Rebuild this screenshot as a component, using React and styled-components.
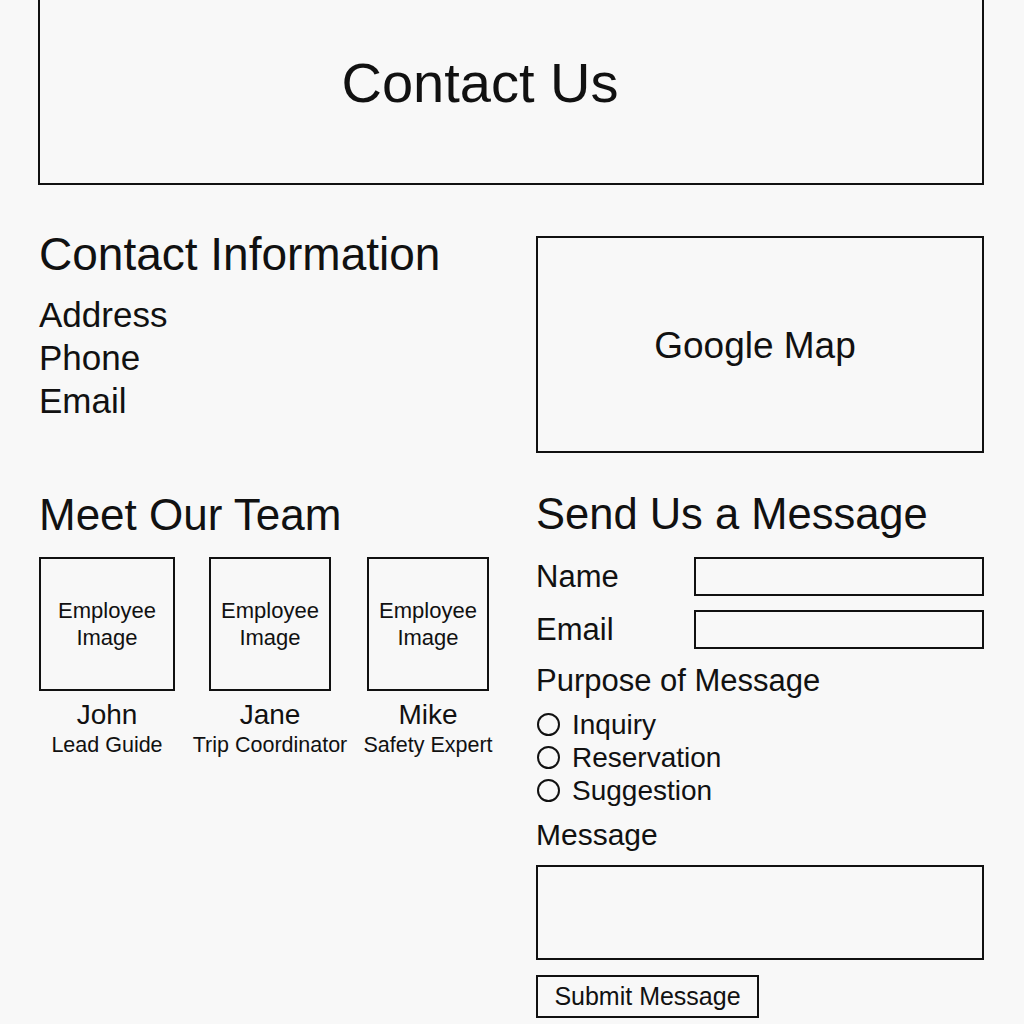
import React from "react";
import styled, { createGlobalStyle } from "styled-components";

const GlobalStyle = createGlobalStyle`
  html, body {
    margin: 0;
    padding: 0;
    background: #f8f8f8;
  }
  body {
    font-family: "Liberation Sans", Arial, sans-serif;
    color: #111;
  }
  * {
    box-sizing: border-box;
  }
`;

const team = [
  { name: "John", role: "Lead Guide", width: 136 },
  { name: "Jane", role: "Trip Coordinator", width: 122 },
  { name: "Mike", role: "Safety Expert", width: 122 },
];

const purposes = ["Inquiry", "Reservation", "Suggestion"];

const App = () => {
  return (
    <Page>
      <GlobalStyle />
      <Header>
        <HeaderTitle>Contact Us</HeaderTitle>
      </Header>

      <Row top={46}>
        <Column>
          <SectionTitle size={46} lh={46}>
            Contact Information
          </SectionTitle>
          <InfoList>
            <InfoItem>Address</InfoItem>
            <InfoItem>Phone</InfoItem>
            <InfoItem>Email</InfoItem>
          </InfoList>
        </Column>
        <MapBox>Google Map</MapBox>
      </Row>

      <Row top={40}>
        <Column>
          <SectionTitle size={44} lh={43}>
            Meet Our Team
          </SectionTitle>
          <Team>
            {team.map(member => (
              <Member key={member.name} width={member.width}>
                <Photo>
                  Employee
                  <br />
                  Image
                </Photo>
                <MemberName>{member.name}</MemberName>
                <MemberRole>{member.role}</MemberRole>
              </Member>
            ))}
          </Team>
        </Column>

        <Form onSubmit={e => e.preventDefault()}>
          <SectionTitle size={43.5} lh={43}>
            Send Us a Message
          </SectionTitle>
          <Fields>
            <FieldRow>
              <FieldLabel>Name</FieldLabel>
              <TextInput type="text" />
            </FieldRow>
            <FieldRow>
              <FieldLabel>Email</FieldLabel>
              <TextInput type="email" />
            </FieldRow>
          </Fields>
          <GroupLabel>Purpose of Message</GroupLabel>
          <RadioList>
            {purposes.map(p => (
              <RadioRow key={p}>
                <Radio type="radio" name="purpose" value={p} />
                {p}
              </RadioRow>
            ))}
          </RadioList>
          <MessageLabel>Message</MessageLabel>
          <MessageBox />
          <SubmitButton type="submit">Submit Message</SubmitButton>
        </Form>
      </Row>
    </Page>
  );
};

export default App;

const Page = styled.div`
  width: 1024px;
  min-height: 1024px;
  padding: 0 40px 0 38px;
  overflow: hidden;
`;

const Header = styled.header`
  height: 189px;
  margin-top: -4px;
  border: 2px solid #111;
  display: flex;
  align-items: center;
  justify-content: center;
  padding: 0 62px 16px 0;
`;

const HeaderTitle = styled.h1`
  margin: 0;
  font-size: 56px;
  line-height: 56px;
  font-weight: 400;
`;

const Row = styled.div`
  display: grid;
  grid-template-columns: 462px 448px;
  column-gap: 36px;
  align-items: start;
  margin-top: ${props => props.top}px;
`;

const Column = styled.div`
  display: flex;
  flex-direction: column;
  padding-left: 1px;
`;

const SectionTitle = styled.h2`
  margin: 0;
  font-size: ${props => props.size}px;
  line-height: ${props => props.lh}px;
  font-weight: 400;
  white-space: nowrap;
`;

const InfoList = styled.div`
  display: flex;
  flex-direction: column;
  margin-top: 16px;
`;

const InfoItem = styled.div`
  font-size: 35px;
  line-height: 43px;
`;

const MapBox = styled.div`
  height: 217px;
  margin-top: 5px;
  border: 2px solid #111;
  display: flex;
  align-items: center;
  justify-content: center;
  font-size: 37px;
  padding: 2px 10px 0 0;
`;

const Team = styled.div`
  display: flex;
  gap: 34px;
  margin-top: 21px;

  & > :last-child {
    margin-left: 2px;
  }
`;

const Member = styled.div`
  width: ${props => props.width}px;
  display: flex;
  flex-direction: column;
  align-items: center;
`;

const Photo = styled.div`
  width: 100%;
  height: 134px;
  border: 2px solid #111;
  display: flex;
  align-items: center;
  justify-content: center;
  text-align: center;
  font-size: 22px;
  line-height: 27px;
`;

const MemberName = styled.div`
  margin-top: 9px;
  font-size: 28px;
  line-height: 30px;
  white-space: nowrap;
`;

const MemberRole = styled.div`
  margin-top: 3px;
  font-size: 21.5px;
  line-height: 24px;
  white-space: nowrap;
`;

const Form = styled.form`
  display: flex;
  flex-direction: column;
  align-items: flex-start;
`;

const Fields = styled.div`
  width: 100%;
  display: flex;
  flex-direction: column;
  gap: 14px;
  margin-top: 21px;
`;

const FieldRow = styled.label`
  display: grid;
  grid-template-columns: 158px 1fr;
  align-items: center;
`;

const FieldLabel = styled.span`
  font-size: 31px;
  line-height: 39px;
`;

const TextInput = styled.input`
  height: 39px;
  margin: 0;
  border: 2px solid #111;
  border-radius: 0;
  background: transparent;
  font: inherit;
  font-size: 20px;
  padding: 0 8px;
  outline: none;
`;

const GroupLabel = styled.div`
  margin-top: 15px;
  font-size: 31px;
  line-height: 34px;
`;

const RadioList = styled.div`
  display: flex;
  flex-direction: column;
  margin-top: 10px;
`;

const RadioRow = styled.label`
  display: flex;
  align-items: center;
  gap: 12px;
  height: 33px;
  font-size: 28px;
  line-height: 33px;
  padding-left: 1px;
`;

const Radio = styled.input`
  appearance: none;
  width: 23px;
  height: 23px;
  margin: 0;
  border: 2px solid #111;
  border-radius: 50%;
  background: transparent;
  flex-shrink: 0;
`;

const MessageLabel = styled.div`
  margin-top: 11px;
  font-size: 30px;
  line-height: 34px;
`;

const MessageBox = styled.textarea`
  width: 100%;
  height: 95px;
  margin-top: 13px;
  border: 2px solid #111;
  border-radius: 0;
  background: transparent;
  resize: none;
  font: inherit;
  outline: none;
`;

const SubmitButton = styled.button`
  margin-top: 15px;
  width: 223px;
  height: 43px;
  border: 2px solid #111;
  border-radius: 0;
  background: transparent;
  color: #111;
  font-family: "Liberation Sans", Arial, sans-serif;
  font-size: 25px;
  padding: 0;
  cursor: pointer;
`;
